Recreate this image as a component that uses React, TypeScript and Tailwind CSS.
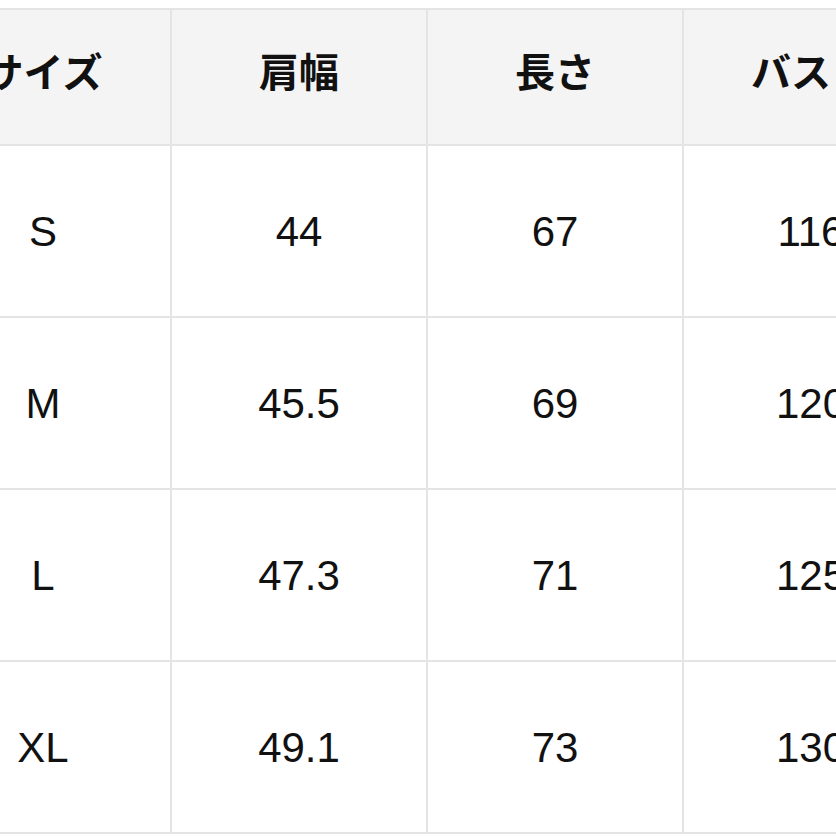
import React from "react";

const headers = ["サイズ", "肩幅", "長さ", "バスト"];
const rows = [
  ["S", "44", "67", "116"],
  ["M", "45.5", "69", "120"],
  ["L", "47.3", "71", "125"],
  ["XL", "49.1", "73", "130"],
];

export default function App() {
  return (
    <div className="w-[836px] h-[836px] overflow-hidden bg-white pt-[8px]">
      <div className="ml-[-84px] w-[1024px] border-t-2 border-[#e4e4e4] grid grid-cols-[256px_256px_256px_256px]">
        {headers.map((h) => (
          <div
            key={h}
            className="h-[136px] bg-[#f4f4f4] border-r-2 border-b-2 border-[#e4e4e4] flex items-center justify-center pb-[14px] text-[40px] font-bold text-[#111] whitespace-nowrap"
            style={{ fontFamily: '"Noto Sans CJK JP", "Noto Sans", sans-serif' }}
          >
            {h}
          </div>
        ))}
        {rows.map((r) =>
          r.map((c, i) => (
            <div
              key={r[0] + i}
              className="h-[172px] bg-white border-r-2 border-b-2 border-[#e4e4e4] flex items-center justify-center text-[42px] text-[#111] whitespace-nowrap"
              style={{ fontFamily: '"Liberation Sans", Arial, sans-serif' }}
            >
              {c}
            </div>
          ))
        )}
      </div>
    </div>
  );
}
